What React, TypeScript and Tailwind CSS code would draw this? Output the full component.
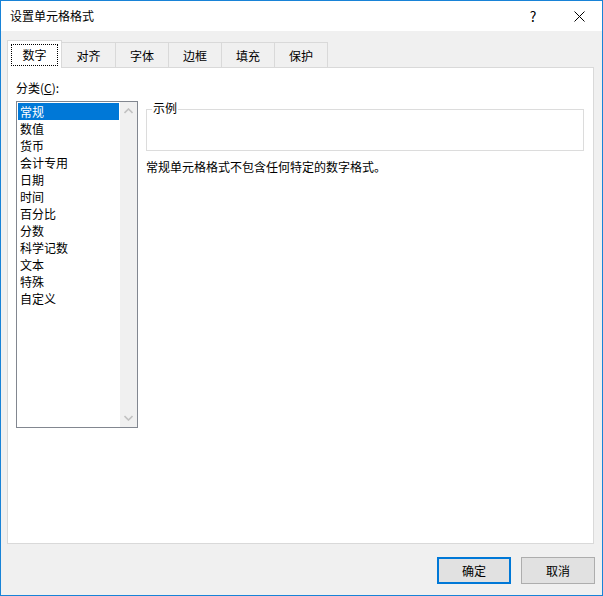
import React from "react";

const tabs = ["数字", "对齐", "字体", "边框", "填充", "保护"];
const tabWidths = ["w-[55px]", "w-[54px]", "w-[53px]", "w-[53px]", "w-[53px]", "w-[53px]"];
const categories = [
  "常规",
  "数值",
  "货币",
  "会计专用",
  "日期",
  "时间",
  "百分比",
  "分数",
  "科学记数",
  "文本",
  "特殊",
  "自定义",
];

const font = { fontFamily: '"Noto Sans CJK SC", "Noto Sans", sans-serif' };

export default function App() {
  return (
    <div
      className="w-[603px] h-[596px] border border-[#1883d7] bg-[#f0f0f0] flex flex-col text-[12px] text-black"
      style={font}
    >
      {/* Title bar */}
      <div className="h-[30px] bg-white flex items-center shrink-0">
        <div className="pl-[9px] flex-1 leading-none">设置单元格格式</div>
        <div className="w-[46px] h-full flex items-center justify-center text-[14px] leading-none">?</div>
        <div className="w-[46px] h-full flex items-center justify-center">
          <svg width="11" height="11" viewBox="0 0 11 11">
            <path d="M0.5 0.5 L10.5 10.5 M10.5 0.5 L0.5 10.5" stroke="#000" strokeWidth="1" />
          </svg>
        </div>
      </div>

      {/* Tabs */}
      <div className="flex items-end pl-[6px] pt-[9px] relative z-10">
        {tabs.map((t, i) =>
          i === 0 ? (
            <div
              key={t}
              className={tabWidths[i] + " h-[28px] bg-white border border-b-0 border-[#d9d9d9] flex items-center justify-center -mb-px"}
            >
              <div className="w-[47px] h-[22px] border border-dotted border-black flex items-center justify-center">
                {t}
              </div>
            </div>
          ) : (
            <div
              key={t}
              className={tabWidths[i] + " h-[25px] border border-b-0 border-l-0 border-[#d9d9d9] flex items-center justify-center pt-[1px]"}
            >
              {t}
            </div>
          )
        )}
      </div>

      {/* Panel */}
      <div className="ml-[6px] mr-[8px] h-[477px] bg-white border border-[#d9d9d9] flex gap-[8px] pl-[8px] pt-[14px]">
        <div className="flex flex-col">
          <div className="leading-none mb-[7px]">
            分类(<span className="underline">C</span>):
          </div>
          <div className="w-[122px] h-[327px] border border-[#828790] flex">
            <div className="flex-1 flex flex-col p-[1px]">
              {categories.map((c, i) => (
                <div
                  key={c}
                  className={
                    "h-[17px] leading-[17px] pl-[2px] " +
                    (i === 0 ? "bg-[#0078d7] text-white" : "")
                  }
                >
                  {c}
                </div>
              ))}
            </div>
            <div className="w-[17px] bg-[#f0f0f0] flex flex-col justify-between items-center py-[6px]">
              <svg width="9" height="6" viewBox="0 0 9 6">
                <path d="M0.5 5 L4.5 1 L8.5 5" stroke="#c2c2c2" strokeWidth="1.6" fill="none" />
              </svg>
              <svg width="9" height="6" viewBox="0 0 9 6">
                <path d="M0.5 1 L4.5 5 L8.5 1" stroke="#c2c2c2" strokeWidth="1.6" fill="none" />
              </svg>
            </div>
          </div>
        </div>

        <div className="flex flex-col pt-[27px]">
          <div className="relative w-[438px] h-[42px] border border-[#dcdcdc]">
            <span className="absolute -top-[8px] left-[5px] bg-white px-[1px] leading-none">示例</span>
          </div>
          <div className="mt-[10px] leading-none">常规单元格格式不包含任何特定的数字格式。</div>
        </div>
      </div>

      {/* Buttons */}
      <div className="flex justify-end gap-[10px] mr-[7px] mt-[13px]">
        <button className="w-[74px] h-[27px] bg-[#e1e1e1] border-2 border-[#0078d7] leading-none">
          确定
        </button>
        <button className="w-[74px] h-[27px] bg-[#e1e1e1] border border-[#adadad] leading-none">
          取消
        </button>
      </div>
    </div>
  );
}
